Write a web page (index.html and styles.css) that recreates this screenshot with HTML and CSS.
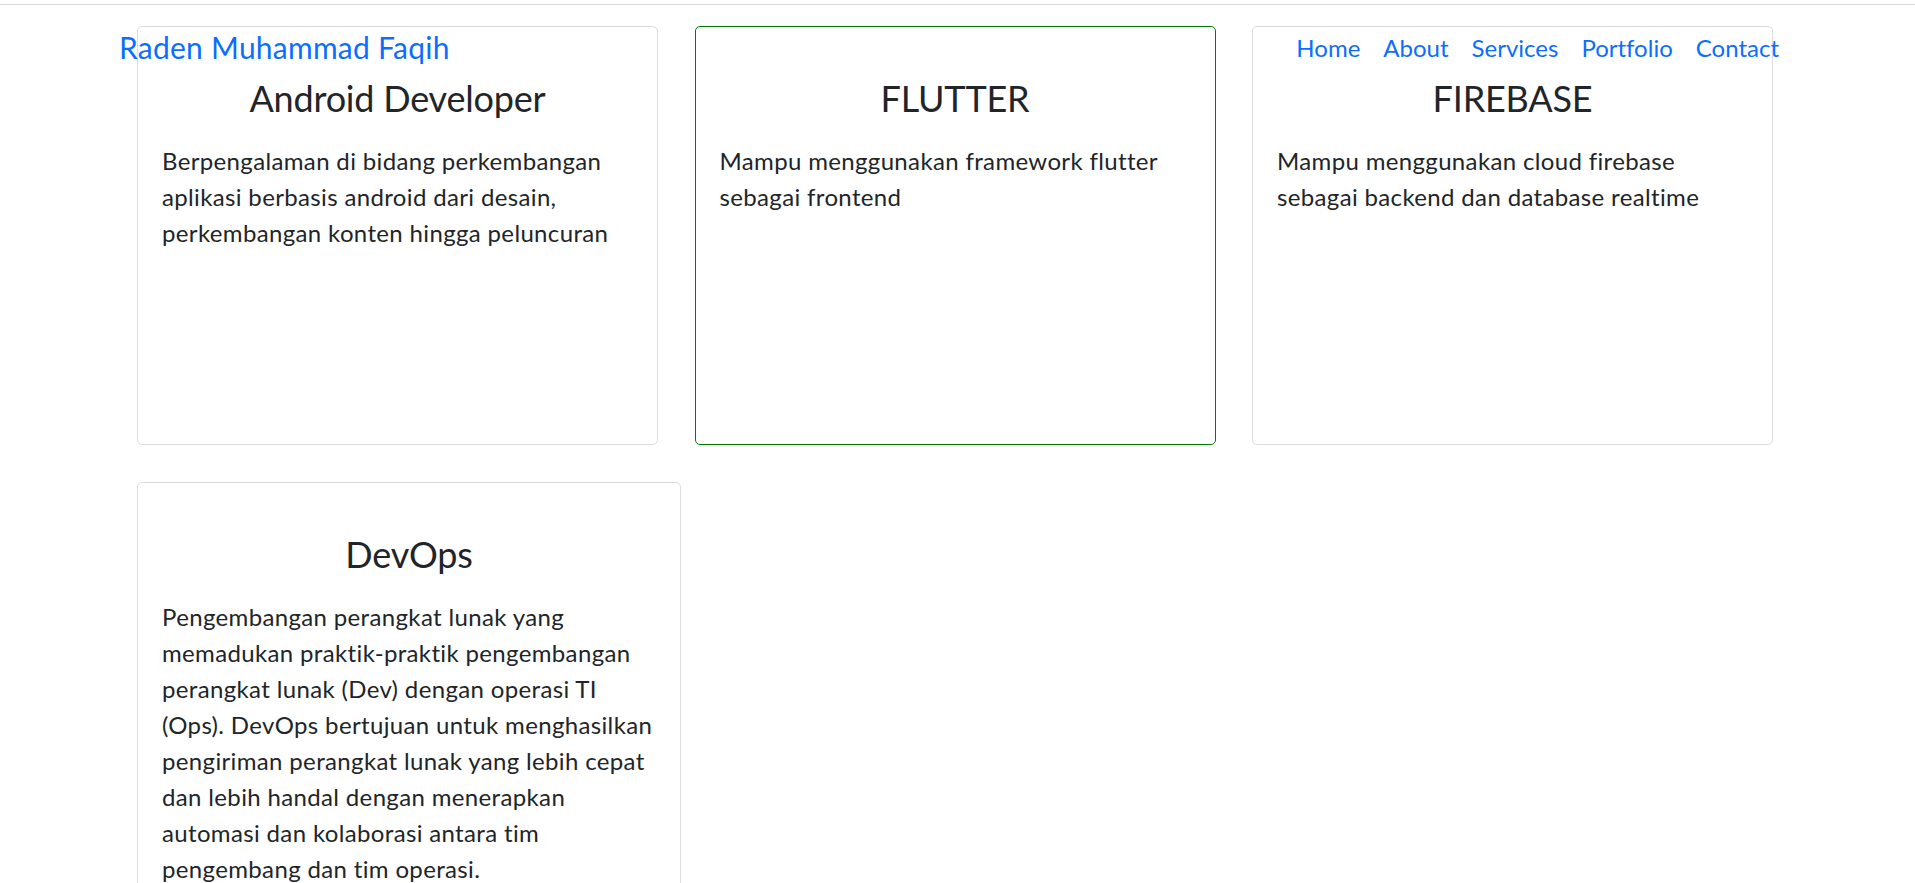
FILE: index.html
```html
<!DOCTYPE html>
<html lang="id">
<head>
<meta charset="utf-8">
<title>Raden Muhammad Faqih</title>
<link rel="stylesheet" href="styles.css">
</head>
<body>
<div class="topline"></div>
<nav class="navbar">
  <a class="brand" href="#">Raden Muhammad Faqih</a>
  <ul class="nav-links">
    <li><a href="#">Home</a></li>
    <li><a href="#">About</a></li>
    <li><a href="#">Services</a></li>
    <li><a href="#">Portfolio</a></li>
    <li><a href="#">Contact</a></li>
  </ul>
</nav>
<main class="services">
  <div class="row row-three">
    <div class="card">
      <h4 class="card-title">Android Developer</h4>
      <p class="card-text">Berpengalaman di bidang perkembangan aplikasi berbasis android dari desain, perkembangan konten hingga peluncuran</p>
    </div>
    <div class="card card-active">
      <h4 class="card-title">FLUTTER</h4>
      <p class="card-text">Mampu menggunakan framework flutter sebagai frontend</p>
    </div>
    <div class="card">
      <h4 class="card-title">FIREBASE</h4>
      <p class="card-text">Mampu menggunakan cloud firebase sebagai backend dan database realtime</p>
    </div>
  </div>
  <div class="row row-one">
    <div class="card card-wide">
      <h4 class="card-title">DevOps</h4>
      <p class="card-text">Pengembangan perangkat lunak yang memadukan praktik-praktik pengembangan perangkat lunak (Dev) dengan operasi TI (Ops). DevOps bertujuan untuk menghasilkan pengiriman perangkat lunak yang lebih cepat dan lebih handal dengan menerapkan automasi dan kolaborasi antara tim pengembang dan tim operasi.</p>
    </div>
  </div>
</main>
</body>
</html>
```
FILE: styles.css
```css
* { box-sizing: border-box; }

html, body {
  margin: 0;
  padding: 0;
  background: #ffffff;
}

body {
  font-family: Lato, "Noto Sans", sans-serif;
  font-variant-ligatures: none;
  color: #212529;
  font-size: 24px;
  line-height: 36px;
  position: relative;
}

.topline {
  height: 1px;
  margin-top: 4px;
  background: #d6d6d6;
}

.navbar {
  position: absolute;
  top: 0;
  left: 0;
  right: 0;
  display: flex;
  justify-content: space-between;
  align-items: flex-start;
  padding: 25px 136px 0 119px;
  z-index: 2;
}

.brand {
  font-size: 30px;
  line-height: 45px;
  letter-spacing: 0.25px;
  color: #0d6efd;
  text-decoration: none;
}

.nav-links {
  list-style: none;
  margin: 5px 0 0 0;
  padding: 0;
  display: flex;
  gap: 23px;
}

.nav-links a {
  font-size: 24px;
  line-height: 36px;
  color: #0d6efd;
  text-decoration: none;
}

.services {
  padding: 21px 0 0 137px;
}

.row {
  display: grid;
}

.row-three {
  grid-template-columns: repeat(3, 521px);
  column-gap: 36.5px;
}

.row-one {
  grid-template-columns: 544px;
  margin-top: 37px;
}

.card {
  border: 1px solid #dcdcdc;
  border-radius: 5px;
  padding: 50px 24px 24px 24px;
  height: 419px;
  background: #fff;
}

.card-active {
  border-color: #007a00;
}

.card-wide {
  height: auto;
  padding-bottom: 40px;
}

.card-title {
  margin: 0 0 23px 0;
  font-size: 36px;
  line-height: 43px;
  font-weight: 400;
  letter-spacing: -0.2px;
  text-align: center;
}

.card-text {
  margin: 0;
  letter-spacing: 0.35px;
}
```
